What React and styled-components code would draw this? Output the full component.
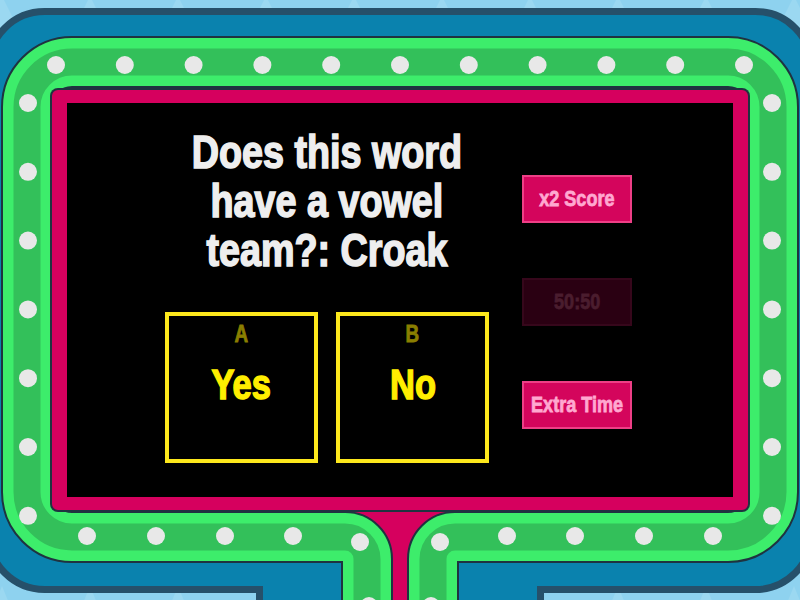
import React from 'react';
import styled, { createGlobalStyle } from 'styled-components';

const GlobalStyle = createGlobalStyle`
  html, body {
    margin: 0;
    padding: 0;
    background: #8ed2ef;
  }
  body {
    width: 800px;
    height: 600px;
    overflow: hidden;
  }
`;

const Stage = styled.div`
  position: relative;
  width: 800px;
  height: 600px;
  overflow: hidden;
  box-sizing: border-box;
  padding: 90px 0 0 52px;
  font-family: "Liberation Sans", Arial, sans-serif;
  font-weight: 700;
`;

const Backdrop = styled.svg`
  position: absolute;
  top: 0;
  left: 0;
`;

const Screen = styled.div`
  position: relative;
  box-sizing: border-box;
  width: 696px;
  height: 420px;
  border: solid #d6005e;
  border-width: 13px 15px 13px 15px;
  border-radius: 6px;
  background: #000;
  display: flex;
  padding-left: 98px;
`;

/* condensed heavy look: the bold face squeezed horizontally and thickened */
const Narrow = styled.span`
  display: inline-block;
  white-space: nowrap;
  transform: scaleX(0.82);
  transform-origin: center;
  -webkit-text-stroke: 0.035em currentColor;
`;

const QuestionColumn = styled.div`
  width: 324px;
  display: flex;
  flex-direction: column;
  align-items: center;
  padding-top: 25px;
`;

const Question = styled.div`
  display: flex;
  flex-direction: column;
  align-items: center;
  color: #eeeeee;
  font-size: 46px;
  line-height: 49px;
`;

const Answers = styled.div`
  display: flex;
  gap: 18px;
  margin-top: 37px;
`;

const AnswerBox = styled.div`
  box-sizing: border-box;
  width: 153px;
  height: 151px;
  border: 4px solid #fde81c;
  display: flex;
  flex-direction: column;
  align-items: center;
  padding-top: 7px;
`;

const Letter = styled(Narrow)`
  color: #8a7e00;
  font-size: 23px;
  line-height: 22px;
`;

const AnswerText = styled(Narrow)`
  color: #ffee00;
  font-size: 42px;
  line-height: 42px;
  margin-top: 19px;
`;

const PowerColumn = styled.div`
  margin-left: 33px;
  padding-top: 72px;
  display: flex;
  flex-direction: column;
  gap: 55px;
`;

const PowerButton = styled.div`
  box-sizing: border-box;
  width: 110px;
  height: 48px;
  display: flex;
  align-items: center;
  justify-content: center;
  font-size: 22px;
  background: ${p => (p.$disabled ? '#2a0012' : '#d4055c')};
  border: 2px solid ${p => (p.$disabled ? '#36071b' : '#ee3f86')};
  color: ${p => (p.$disabled ? '#4a1d2e' : '#ffa8d0')};
`;

const C = {
  dark: '#26506a',
  blue: '#0a82ae',
  bright: '#3ded6b',
  mid: '#33c05a',
  dot: '#e8e8e8',
  pink: '#d6005e',
  line: '#1f3340',
};

const tube =
  'M 367 640 L 367 559 A 22 22 0 0 0 345 537 L 72 537 A 45 45 0 0 1 27 492 ' +
  'L 27 107 A 45 45 0 0 1 72 62 L 728 62 A 45 45 0 0 1 773 107 L 773 492 ' +
  'A 45 45 0 0 1 728 537 L 455 537 A 22 22 0 0 0 433 559 L 433 640';

const frame =
  'M 44.5 11.5 L 755.5 11.5 A 56 56 0 0 1 811.5 67.5 L 811.5 533.5 ' +
  'A 56 56 0 0 1 755.5 589.5 L 540.5 589.5 L 540.5 640 L 259.5 640 L 259.5 589.5 ' +
  'L 44.5 589.5 A 56 56 0 0 1 -11.5 533.5 L -11.5 67.5 A 56 56 0 0 1 44.5 11.5 Z';

function dots() {
  const list = [];
  for (let i = 0; i <= 10; i++) list.push([56 + i * 68.8, 65]);
  for (let j = 0; j <= 6; j++) {
    list.push([28, 103 + j * 68.8]);
    list.push([772, 103 + j * 68.8]);
  }
  [87, 156, 225, 293].forEach(x => {
    list.push([x, 536]);
    list.push([800 - x, 536]);
  });
  list.push([360, 542], [440, 542], [369, 606], [431, 606]);
  return list;
}

function FrameArt() {
  const peaks = [];
  for (let x = -20; x < 820; x += 88) peaks.push(x);
  return (
    <Backdrop width="800" height="600" viewBox="0 0 800 600">
      <rect x="0" y="0" width="800" height="600" fill="#8ed2ef" />
      {peaks.map(x => (
        <g key={x} fill="#9bd8f1">
          <polygon points={`${x},40 ${x + 22},-4 ${x + 44},40`} />
          <polygon points={`${x},640 ${x + 22},586 ${x + 44},640`} />
        </g>
      ))}
      <path d={frame} fill={C.blue} stroke={C.dark} strokeWidth="7" />
      <rect x="40" y="75" width="720" height="450" fill={C.bright} />
      <rect x="345" y="495" width="110" height="110" fill={C.pink} />
      <path d={tube} fill="none" stroke={C.line} strokeWidth="52" strokeLinejoin="round" />
      <path d={tube} fill="none" stroke={C.bright} strokeWidth="48" strokeLinejoin="round" />
      <path d={tube} fill="none" stroke={C.mid} strokeWidth="27" strokeLinejoin="round" />
      {dots().map(([x, y], k) => (
        <circle key={k} cx={x} cy={y} r="9" fill={C.dot} />
      ))}
      <rect x="50" y="88" width="700" height="424" rx="8" fill={C.line} />
    </Backdrop>
  );
}

export default function App() {
  return (
    <>
      <GlobalStyle />
      <Stage>
        <FrameArt />
        <Screen>
          <QuestionColumn>
            <Question>
              <Narrow>Does this word</Narrow>
              <Narrow>have a vowel</Narrow>
              <Narrow>team?: Croak</Narrow>
            </Question>
            <Answers>
              <AnswerBox>
                <Letter>A</Letter>
                <AnswerText>Yes</AnswerText>
              </AnswerBox>
              <AnswerBox>
                <Letter>B</Letter>
                <AnswerText>No</AnswerText>
              </AnswerBox>
            </Answers>
          </QuestionColumn>
          <PowerColumn>
            <PowerButton><Narrow>x2 Score</Narrow></PowerButton>
            <PowerButton $disabled><Narrow>50:50</Narrow></PowerButton>
            <PowerButton><Narrow>Extra Time</Narrow></PowerButton>
          </PowerColumn>
        </Screen>
      </Stage>
    </>
  );
}
